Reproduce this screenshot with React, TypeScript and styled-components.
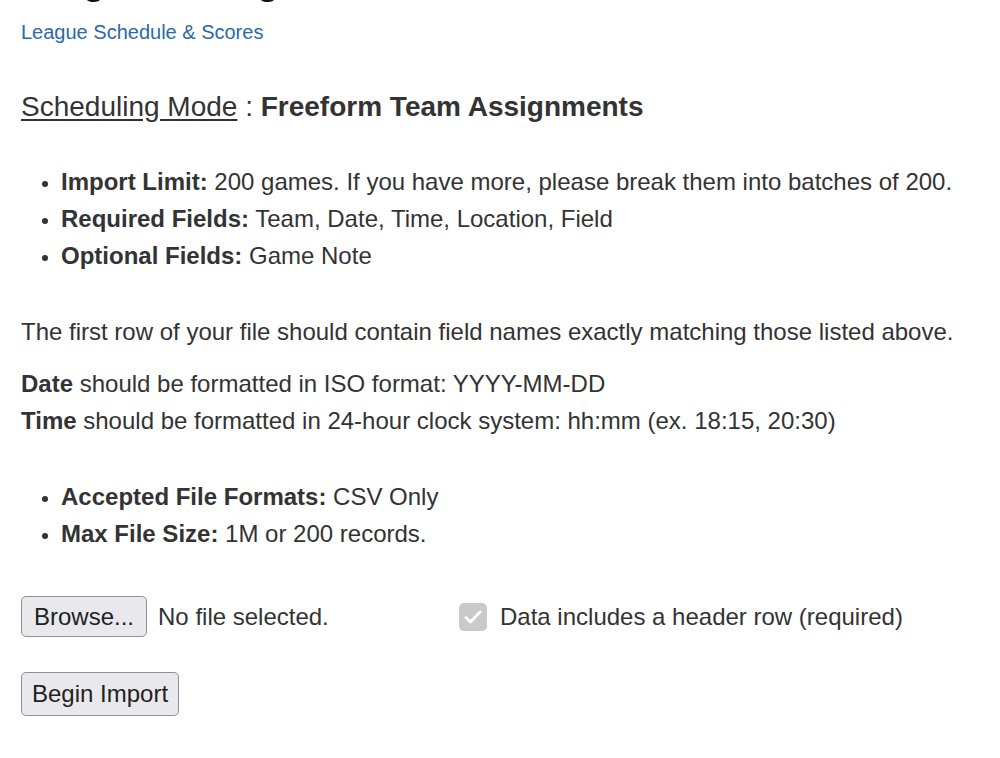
import { createGlobalStyle, styled } from 'styled-components';

const GlobalStyle = createGlobalStyle`
  html, body {
    margin: 0;
    padding: 0;
    background: #ffffff;
  }
  body {
    font-family: 'Liberation Sans', Arial, Helvetica, sans-serif;
    color: #333333;
    overflow: hidden;
  }
`;

const Page = styled.div`
  padding: 0 21px;
  width: 1000px;
  box-sizing: border-box;
`;

// heading is scrolled mostly out of view
const PageTitle = styled.h1`
  margin: -38px 0 0;
  font-size: 36px;
  line-height: 40px;
  font-weight: bold;
  color: #111;
`;

const BackLink = styled.a`
  display: block;
  margin-top: 18px;
  font-size: 20px;
  line-height: 24px;
  color: #2a6aa6;
  text-decoration: none;
`;

const ModeHeading = styled.h2`
  margin: 47px 0 0;
  font-size: 28px;
  line-height: 32px;
  font-weight: normal;
`;

const ModeLabel = styled.span`
  text-decoration: underline;
  text-underline-offset: 3px;
`;

const ModeValue = styled.strong`
  font-weight: bold;
`;

const InfoList = styled.ul<{ $top: number }>`
  margin: ${(p) => p.$top}px 0 0;
  padding-left: 40px;
  font-size: 24px;
  line-height: 37px;
  li::marker {
    font-size: 20px;
  }
`;

const Para = styled.p<{ $top: number }>`
  margin: ${(p) => p.$top}px 0 0;
  font-size: 24px;
  line-height: 37px;
`;

const UploadRow = styled.div`
  display: grid;
  grid-template-columns: 438px auto;
  align-items: center;
  margin-top: 44px;
  font-size: 24px;
`;

const FilePick = styled.div`
  display: flex;
  align-items: center;
  gap: 11px;
`;

const Button = styled.button<{ $h?: number; $px?: number }>`
  font-family: 'Liberation Sans', Arial, Helvetica, sans-serif;
  font-size: 24px;
  color: #222;
  background: #e9e9ed;
  border: 1.5px solid #8f8f9d;
  border-radius: 5px;
  padding: 0 ${(p) => p.$px ?? 12}px;
  height: ${(p) => p.$h ?? 41}px;
  cursor: pointer;
`;

const CheckLabel = styled.label`
  display: flex;
  align-items: center;
  gap: 13px;
`;

const CheckBox = styled.span`
  width: 28px;
  height: 28px;
  border-radius: 5px;
  background: #c9c9ce;
  display: flex;
  align-items: center;
  justify-content: center;
`;

const ImportRow = styled.div`
  margin-top: 35px;
`;

export default function App() {
  return (
    <>
      <GlobalStyle />
      <Page>
        <PageTitle>League Settings:</PageTitle>
        <BackLink href="#">League Schedule &amp; Scores</BackLink>
        <ModeHeading>
          <ModeLabel>Scheduling Mode</ModeLabel> :{' '}
          <ModeValue>Freeform Team Assignments</ModeValue>
        </ModeHeading>
        <InfoList $top={40}>
          <li>
            <b>Import Limit:</b> 200 games. If you have more, please break them
            into batches of 200.
          </li>
          <li>
            <b>Required Fields:</b> Team, Date, Time, Location, Field
          </li>
          <li>
            <b>Optional Fields:</b> Game Note
          </li>
        </InfoList>
        <Para $top={39}>
          The first row of your file should contain field names exactly
          matching those listed above.
        </Para>
        <Para $top={15}>
          <b>Date</b> should be formatted in ISO format: YYYY-MM-DD
          <br />
          <b>Time</b> should be formatted in 24-hour clock system: hh:mm (ex.
          18:15, 20:30)
        </Para>
        <InfoList $top={39}>
          <li>
            <b>Accepted File Formats:</b> CSV Only
          </li>
          <li>
            <b>Max File Size:</b> 1M or 200 records.
          </li>
        </InfoList>
        <UploadRow>
          <FilePick>
            <Button type="button">Browse...</Button>
            <span>No file selected.</span>
          </FilePick>
          <CheckLabel>
            <CheckBox>
              <svg width="24" height="24" viewBox="0 0 24 24" fill="none">
                <path
                  d="M5 12.5l4.5 4.5 9.5-10"
                  stroke="#ffffff"
                  strokeWidth="3"
                  strokeLinecap="round"
                  strokeLinejoin="round"
                />
              </svg>
            </CheckBox>
            Data includes a header row (required)
          </CheckLabel>
        </UploadRow>
        <ImportRow>
          <Button type="button" $h={44} $px={10}>
            Begin Import
          </Button>
        </ImportRow>
      </Page>
    </>
  );
}
